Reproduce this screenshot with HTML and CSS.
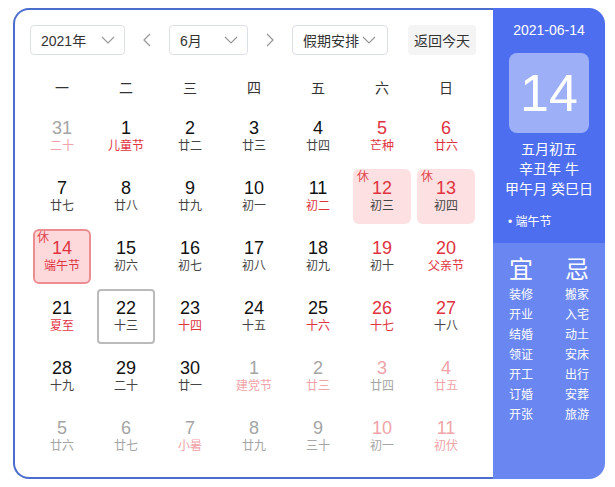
FILE: index.html
```html
<!DOCTYPE html>
<html lang="zh">
<head>
<meta charset="utf-8">
<title>万年历</title>
<link rel="stylesheet" href="styles.css">
</head>
<body>
<div class="calendar">
  <div class="main">
    <div class="toolbar">
      <div class="select sel-year"><span>2021年</span><svg class="chev" viewBox="0 0 14 8" width="14" height="8"><path d="M1 1 L7 7 L13 1" fill="none" stroke="#999" stroke-width="1.2"/></svg></div>
      <div class="arrow"><svg viewBox="0 0 8 14" width="8" height="14"><path d="M7 1 L1 7 L7 13" fill="none" stroke="#999" stroke-width="1.3"/></svg></div>
      <div class="select sel-month"><span>6月</span><svg class="chev" viewBox="0 0 14 8" width="14" height="8"><path d="M1 1 L7 7 L13 1" fill="none" stroke="#999" stroke-width="1.2"/></svg></div>
      <div class="arrow"><svg viewBox="0 0 8 14" width="8" height="14"><path d="M1 1 L7 7 L1 13" fill="none" stroke="#999" stroke-width="1.3"/></svg></div>
      <div class="select sel-holiday"><span>假期安排</span><svg class="chev" viewBox="0 0 14 8" width="14" height="8"><path d="M1 1 L7 7 L13 1" fill="none" stroke="#999" stroke-width="1.2"/></svg></div>
      <div class="today-btn">返回今天</div>
    </div>
    <div class="weekdays">
      <div>一</div><div>二</div><div>三</div><div>四</div><div>五</div><div>六</div><div>日</div>
    </div>
    <div class="grid">
      <div class="cell"><div class="box"><div class="num gray">31</div><div class="lunar lred">二十</div></div></div>
      <div class="cell"><div class="box"><div class="num">1</div><div class="lunar red">儿童节</div></div></div>
      <div class="cell"><div class="box"><div class="num">2</div><div class="lunar">廿二</div></div></div>
      <div class="cell"><div class="box"><div class="num">3</div><div class="lunar">廿三</div></div></div>
      <div class="cell"><div class="box"><div class="num">4</div><div class="lunar">廿四</div></div></div>
      <div class="cell"><div class="box"><div class="num red">5</div><div class="lunar red">芒种</div></div></div>
      <div class="cell"><div class="box"><div class="num red">6</div><div class="lunar red">廿六</div></div></div>

      <div class="cell"><div class="box"><div class="num">7</div><div class="lunar">廿七</div></div></div>
      <div class="cell"><div class="box"><div class="num">8</div><div class="lunar">廿八</div></div></div>
      <div class="cell"><div class="box"><div class="num">9</div><div class="lunar">廿九</div></div></div>
      <div class="cell"><div class="box"><div class="num">10</div><div class="lunar">初一</div></div></div>
      <div class="cell"><div class="box"><div class="num">11</div><div class="lunar red">初二</div></div></div>
      <div class="cell"><div class="box rest"><span class="tag">休</span><div class="num red">12</div><div class="lunar">初三</div></div></div>
      <div class="cell"><div class="box rest"><span class="tag">休</span><div class="num red">13</div><div class="lunar">初四</div></div></div>

      <div class="cell"><div class="box rest selected"><span class="tag">休</span><div class="num red">14</div><div class="lunar red">端午节</div></div></div>
      <div class="cell"><div class="box"><div class="num">15</div><div class="lunar">初六</div></div></div>
      <div class="cell"><div class="box"><div class="num">16</div><div class="lunar">初七</div></div></div>
      <div class="cell"><div class="box"><div class="num">17</div><div class="lunar">初八</div></div></div>
      <div class="cell"><div class="box"><div class="num">18</div><div class="lunar">初九</div></div></div>
      <div class="cell"><div class="box"><div class="num red">19</div><div class="lunar">初十</div></div></div>
      <div class="cell"><div class="box"><div class="num red">20</div><div class="lunar red">父亲节</div></div></div>

      <div class="cell"><div class="box"><div class="num">21</div><div class="lunar red">夏至</div></div></div>
      <div class="cell"><div class="box today"><div class="num">22</div><div class="lunar">十三</div></div></div>
      <div class="cell"><div class="box"><div class="num">23</div><div class="lunar red">十四</div></div></div>
      <div class="cell"><div class="box"><div class="num">24</div><div class="lunar">十五</div></div></div>
      <div class="cell"><div class="box"><div class="num">25</div><div class="lunar red">十六</div></div></div>
      <div class="cell"><div class="box"><div class="num red">26</div><div class="lunar red">十七</div></div></div>
      <div class="cell"><div class="box"><div class="num red">27</div><div class="lunar">十八</div></div></div>

      <div class="cell"><div class="box"><div class="num">28</div><div class="lunar">十九</div></div></div>
      <div class="cell"><div class="box"><div class="num">29</div><div class="lunar">二十</div></div></div>
      <div class="cell"><div class="box"><div class="num">30</div><div class="lunar">廿一</div></div></div>
      <div class="cell"><div class="box"><div class="num gray">1</div><div class="lunar lred">建党节</div></div></div>
      <div class="cell"><div class="box"><div class="num gray">2</div><div class="lunar lred">廿三</div></div></div>
      <div class="cell"><div class="box"><div class="num lred">3</div><div class="lunar gray">廿四</div></div></div>
      <div class="cell"><div class="box"><div class="num lred">4</div><div class="lunar lred">廿五</div></div></div>

      <div class="cell"><div class="box"><div class="num gray">5</div><div class="lunar gray">廿六</div></div></div>
      <div class="cell"><div class="box"><div class="num gray">6</div><div class="lunar gray">廿七</div></div></div>
      <div class="cell"><div class="box"><div class="num gray">7</div><div class="lunar lred">小暑</div></div></div>
      <div class="cell"><div class="box"><div class="num gray">8</div><div class="lunar gray">廿九</div></div></div>
      <div class="cell"><div class="box"><div class="num gray">9</div><div class="lunar gray">三十</div></div></div>
      <div class="cell"><div class="box"><div class="num lred">10</div><div class="lunar gray">初一</div></div></div>
      <div class="cell"><div class="box"><div class="num lred">11</div><div class="lunar lred">初伏</div></div></div>
    </div>
  </div>
  <div class="panel">
    <div class="panel-top">
      <div class="p-date">2021-06-14</div>
      <div class="p-day">14</div>
      <div class="p-line">五月初五</div>
      <div class="p-line">辛丑年 牛</div>
      <div class="p-line">甲午月 癸巳日</div>
      <div class="p-fest">• 端午节</div>
    </div>
    <div class="panel-bottom">
      <div class="yj">
        <div class="yj-col">
          <div class="yj-title">宜</div>
          <div>装修</div><div>开业</div><div>结婚</div><div>领证</div><div>开工</div><div>订婚</div><div>开张</div>
        </div>
        <div class="yj-col">
          <div class="yj-title">忌</div>
          <div>搬家</div><div>入宅</div><div>动土</div><div>安床</div><div>出行</div><div>安葬</div><div>旅游</div>
        </div>
      </div>
    </div>
  </div>
</div>
</body>
</html>
```

FILE: styles.css
```css
* { box-sizing: border-box; }
html, body { margin: 0; padding: 0; background: #fff; }
body {
  font-family: "Liberation Sans", Arial, "Noto Sans CJK SC", sans-serif;
  color: #333;
}
.calendar {
  display: flex;
  margin: 8px 0 0 13px;
  width: 592px;
  height: 471px;
}
.main {
  width: 480px;
  height: 471px;
  border: 2px solid #4b6dcc;
  border-right: none;
  border-radius: 16px 0 0 16px;
  padding: 15px 15px 0 15px;
  background: #fff;
}
.toolbar {
  display: flex;
  align-items: center;
  height: 30px;
}
.select {
  height: 30px;
  border: 1px solid #dcdfe6;
  border-radius: 4px;
  display: flex;
  align-items: center;
  justify-content: space-between;
  padding: 0 9px 0 10px;
  font-size: 14px;
  color: #333;
}
.sel-year { width: 95px; }
.sel-month { width: 79px; }
.sel-holiday { width: 96px; padding-right: 11px; }
.chev { display: block; }
.arrow {
  width: 44px;
  display: flex;
  justify-content: center;
  align-items: center;
}
.arrow svg { display: block; }
.today-btn {
  margin-left: 20px;
  width: 68px;
  height: 30px;
  border-radius: 4px;
  background: #f4f4f5;
  font-size: 14px;
  color: #333;
  display: flex;
  align-items: center;
  justify-content: center;
}
.weekdays {
  margin-top: 12px;
  display: grid;
  grid-template-columns: repeat(7, 64px);
  height: 40px;
  align-items: center;
  text-align: center;
  font-size: 14px;
  color: #333;
}
.grid {
  display: grid;
  grid-template-columns: repeat(7, 64px);
  grid-auto-rows: 60px;
}
.cell {
  padding: 2px 3px 3px 3px;
}
.box {
  position: relative;
  height: 55px;
  border-radius: 6px;
  padding-top: 9px;
  display: flex;
  flex-direction: column;
  align-items: center;
}
.box.rest { background: #fde1e2; }
.box.selected {
  border: 2px solid #ec8d92;
  padding-top: 7px;
  background: #fdd9db;
}
.box.today {
  border: 2px solid #bbbbbb;
  border-radius: 4px;
  padding-top: 7px;
}
.tag {
  position: absolute;
  top: 1px;
  left: 4px;
  font-size: 12px;
  line-height: 14px;
  color: #e0474f;
}
.box.selected .tag { top: 0px; left: 2px; }
.num {
  font-size: 18px;
  line-height: 20px;
  color: #111;
}
.lunar {
  font-size: 12px;
  line-height: 16px;
  color: #444;
}
.num.red, .lunar.red { color: #e0333f; }
.num.gray, .lunar.gray { color: #a5a5a5; }
.num.lred, .lunar.lred { color: #f0a3a8; }

.panel {
  width: 112px;
  height: 471px;
  border-radius: 0 16px 16px 0;
  overflow: hidden;
  display: flex;
  flex-direction: column;
  color: #fff;
}
.panel-top {
  background: #4e6ef0;
  height: 235px;
  padding-top: 12px;
  display: flex;
  flex-direction: column;
  align-items: center;
}
.p-date { font-size: 14px; line-height: 20px; }
.p-day {
  margin-top: 13px;
  width: 80px;
  height: 80px;
  border-radius: 8px;
  background: rgba(255, 255, 255, 0.45);
  font-size: 52px;
  line-height: 80px;
  text-align: center;
}
.p-line {
  font-size: 14px;
  line-height: 20px;
}
.p-date + .p-day + .p-line { margin-top: 6px; }
.p-fest {
  align-self: flex-start;
  margin-top: 13px;
  margin-left: 15px;
  font-size: 12px;
  line-height: 20px;
}
.panel-bottom {
  flex: 1;
  background: #6a86f1;
  padding-top: 12px;
}
.yj {
  display: flex;
}
.yj-col {
  width: 56px;
  display: flex;
  flex-direction: column;
  align-items: center;
  font-size: 12px;
  line-height: 20px;
}
.yj-title {
  font-size: 24px;
  line-height: 30px;
}
```
